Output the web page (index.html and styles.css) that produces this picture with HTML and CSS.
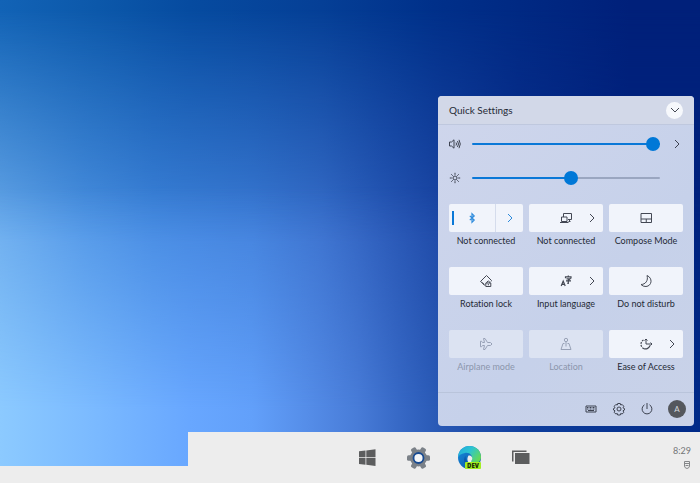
FILE: index.html
```html
<!DOCTYPE html>
<html lang="en">
<head>
<meta charset="utf-8">
<title>Quick Settings</title>
<link rel="stylesheet" href="styles.css">
</head>
<body>
<svg class="defs" aria-hidden="true">
  <symbol id="chevron" viewBox="0 0 12 12"><path d="M4 2l4 4-4 4"/></symbol>
</svg>
<div class="desktop">
  <div class="wallpaper"></div>

  <section class="panel">
    <header class="panel-head">
      <h1>Quick Settings</h1>
      <button class="collapse" aria-label="Collapse"><svg viewBox="0 0 12 12" class="ic ic-12"><path d="M2 4l4 4 4-4"/></svg></button>
    </header>

    <div class="sliders">
      <label class="slider-icon" for="volume" aria-label="Volume">
        <svg viewBox="0 0 14 14" class="ic ic-14"><path d="M1.500 5h2L6 2.800v8.400L3.500 9h-2zM8 5.500q1 1.500 0 3M9.500 4q2 3 0 6M11 2.800q2.600 4.200 0 8.400"/></svg>
      </label>
      <input type="range" id="volume" min="0" max="100" value="100" style="--fill:100%">
      <button class="more" aria-label="Audio devices"><svg class="ic ic-12"><use href="#chevron"/></svg></button>

      <label class="slider-icon" for="brightness" aria-label="Brightness">
        <svg viewBox="0 0 14 14" class="ic ic-14"><circle cx="7" cy="7" r="2"/><path d="M7 1.800v2M7 10.200v2M1.800 7h2M10.200 7h2M3.300 3.300l1.400 1.400M9.300 9.300l1.400 1.400M10.700 3.300L9.300 4.700M4.700 9.300l-1.400 1.400"/></svg>
      </label>
      <input type="range" id="brightness" min="0" max="100" value="53" style="--fill:53%">
    </div>

    <div class="tiles">
      <div class="tile on">
        <div class="tile-face">
          <button class="tile-main" aria-labelledby="t1"><svg viewBox="0 0 14 14" class="ic ic-14"><path d="M4.800 4.900l4.400 4.200L7 11.300V2.700l2.200 2.200-4.400 4.200" stroke-width="1.200"/></svg></button>
          <button class="tile-more" aria-label="Bluetooth devices"><svg class="ic ic-12"><use href="#chevron"/></svg></button>
        </div>
        <span class="tile-label" id="t1">Not connected</span>
      </div>
      <div class="tile">
        <div class="tile-face">
          <button class="tile-main" aria-labelledby="t2"><svg viewBox="0 0 14 14" class="ic ic-14"><path d="M4.500 6V2.500h8v6H9M2.500 6H8v4.500H2.500zM1 11.500h8.500M9.500 10.500h2M10.500 8.500v2"/></svg></button>
          <button class="tile-more" aria-label="Networks"><svg class="ic ic-12"><use href="#chevron"/></svg></button>
        </div>
        <span class="tile-label" id="t2">Not connected</span>
      </div>
      <div class="tile">
        <div class="tile-face">
          <button class="tile-main" aria-labelledby="t3"><svg viewBox="0 0 14 14" class="ic ic-14"><path d="M2 2.500h10.500v9H2zM2 8h10.500M7.250 8v3.500"/></svg></button>
        </div>
        <span class="tile-label" id="t3">Compose Mode</span>
      </div>
      <div class="tile">
        <div class="tile-face">
          <button class="tile-main" aria-labelledby="t4"><svg viewBox="0 0 14 14" class="ic ic-14"><path d="M5.500 10.500L1.500 7.500l6-6 5 5M3 8.500l2.500 3M12.500 6.500l-.500 1M6.800 9h5v3.500h-5zM7.800 9V8q1.500-2 3 0v1M9.300 10v1.300"/></svg></button>
        </div>
        <span class="tile-label" id="t4">Rotation lock</span>
      </div>
      <div class="tile">
        <div class="tile-face">
          <button class="tile-main" aria-labelledby="t5"><svg viewBox="0 0 14 14" class="ic ic-14"><path d="M2.200 12l2-5 2 5M3 10.300h2.400M6.500 4.200V2.800h5.500v1.400M9.300 1.500v1.300M7.500 4.800h3.500L9.300 6.300V9.300H8.300M7 6.800h5" stroke-width="1.200"/></svg></button>
          <button class="tile-more" aria-label="Languages"><svg class="ic ic-12"><use href="#chevron"/></svg></button>
        </div>
        <span class="tile-label" id="t5">Input language</span>
      </div>
      <div class="tile">
        <div class="tile-face">
          <button class="tile-main" aria-labelledby="t6"><svg viewBox="0 0 14 14" class="ic ic-14"><path d="M8 1.500C14 4 13 12 7 12.500Q4 12.700 2 10.500C6.500 10.500 9.500 6.500 8 1.500z"/></svg></button>
        </div>
        <span class="tile-label" id="t6">Do not disturb</span>
      </div>
      <div class="tile off">
        <div class="tile-face">
          <button class="tile-main" aria-labelledby="t7" disabled><svg viewBox="0 0 14 14" class="ic ic-14"><path d="M4.500 1.500H6L8.500 5.500h3q3 1.500 0 3h-3L6 12.500H4.500l1-4H3.500L2.500 9.800H1.500V4.200h1l1 1.300h2z"/></svg></button>
        </div>
        <span class="tile-label" id="t7">Airplane mode</span>
      </div>
      <div class="tile off">
        <div class="tile-face">
          <button class="tile-main" aria-labelledby="t8" disabled><svg viewBox="0 0 14 14" class="ic ic-14"><circle cx="7" cy="3" r="1.700"/><path d="M7 4.700V9.500M5.500 6.500H4l-2 6h10l-2-6H8.500"/></svg></button>
        </div>
        <span class="tile-label" id="t8">Location</span>
      </div>
      <div class="tile">
        <div class="tile-face">
          <button class="tile-main" aria-labelledby="t9"><svg viewBox="0 0 14 14" class="ic ic-14"><path d="M11 8.500A4.800 4.800 0 0 1 5 11.700" stroke-width="1.200"/><path d="M5 11.700A4.800 4.800 0 0 1 4.500 3" stroke-width="1.200" stroke-dasharray="2 1"/><path d="M7 2v5h6M7 2L5.500 3.500M7 2l1.500 1.500M13 7l-1.500-1.500M13 7l-1.500 1.500"/></svg></button>
          <button class="tile-more" aria-label="Accessibility options"><svg class="ic ic-12"><use href="#chevron"/></svg></button>
        </div>
        <span class="tile-label" id="t9">Ease of Access</span>
      </div>
    </div>

    <footer class="panel-foot">
      <button aria-label="Keyboard"><svg viewBox="0 0 14 14" class="ic ic-14"><path d="M2 4h10v6H2z"/><path d="M3 5.500h8M3 7h8" stroke-dasharray="1 .5"/><path d="M4 8.500h6"/></svg></button>
      <button aria-label="Settings"><svg viewBox="0 0 14 14" class="ic ic-14"><circle cx="7" cy="7" r="2"/><path d="M5.700 1.500h2.600l.4 1.500 1.500-.5 1.600 1.800-.8 1.500 1.500.8v1.400l-1.500.8.8 1.500-1.600 1.700-1.500-.5-.4 1.500H5.700L5.300 11.500l-1.500.5-1.600-1.700.8-1.500L1.500 8V6.600L3 5.800l-.8-1.500 1.600-1.800 1.500.5z"/></svg></button>
      <button aria-label="Power"><svg viewBox="0 0 14 14" class="ic ic-14"><path d="M7 1v6M4.500 2.800a4.900 4.900 0 1 0 5 0"/></svg></button>
      <button class="avatar" aria-label="Account">A</button>
    </footer>
  </section>

  <nav class="taskbar" aria-label="Taskbar">
    <div class="apps">
      <button aria-label="Start"><svg viewBox="0 0 26 26" class="app"><path fill="#5c5d5e" d="M4 6.300l6.500-.8v6.700H4zM11.300 5.400L20.500 4.300v7.900h-9.200zM4 13h6.500v6.700L4 18.900zM11.300 13h9.200v8l-9.200-1.200z"/></svg></button>
      <button aria-label="Settings app"><svg viewBox="0 0 26 26" class="app">
        <g fill="#7b8188">
          <circle cx="12.500" cy="13" r="8.500"/>
          <rect x="1" y="10.300" width="23" height="5.400" rx="1.500"/>
          <rect x="1" y="10.300" width="23" height="5.400" rx="1.500" transform="rotate(60 12.500 13)"/>
          <rect x="1" y="10.300" width="23" height="5.400" rx="1.500" transform="rotate(120 12.500 13)"/>
        </g>
        <circle cx="12.500" cy="13" r="5" fill="#f3f5f7" stroke="#174a92" stroke-width="1.800"/>
      </svg></button>
      <button aria-label="Edge Dev">
        <svg viewBox="0 0 26 26" class="app">
          <defs>
            <linearGradient id="wave" x1="0" y1="0" x2="1" y2=".6"><stop offset="0" stop-color="#20a6dc"/><stop offset=".5" stop-color="#2cc4d2"/><stop offset="1" stop-color="#63d957"/></linearGradient>
            <linearGradient id="deep" x1="0" y1="0" x2="1" y2="1"><stop offset="0" stop-color="#168de0"/><stop offset="1" stop-color="#0c4d9c"/></linearGradient>
          </defs>
          <circle cx="12.500" cy="12.500" r="11.500" fill="url(#deep)"/>
          <path fill="url(#wave)" d="M1 12.500C1.500 5 6.500 1 12.500 1c7 0 11.500 5 11.500 11 0 4-3 6.500-7 6.500-3 0-4-1.500-2.500-3.500 2-4-2-8-6.500-7-4 .5-6.500 2.500-7 4.500z"/>
          <path fill="#0b5aad" d="M8.500 11c-3 4-1 10 4 12h4v-4c-5 0-8-3-8-8z"/>
          <path fill="#ededed" d="M11.500 10.500c3-.5 5 2.500 3 5-.8 1.500 0 3 2.500 3l-2 1c-4-1-6-5-3.500-9z"/>
          <rect x="8" y="17" width="16" height="7" rx="1" fill="#a2ee22"/>
          <text class="badge" x="16" y="23" text-anchor="middle">DEV</text>
        </svg>
      </button>
      <button aria-label="Task view"><svg viewBox="0 0 26 26" class="app"><path fill="#5c5d5e" d="M4 5.500h14.500V7H5.500v9.500H4zM7 8h14.500v11H7z"/></svg></button>
    </div>
    <div class="tray">
      <time>8:29</time>
      <svg viewBox="0 0 8 8" class="ic ic-8"><path d="M1.500 .5h5v4.500q0 2-2.500 2.500Q1.500 7 1.500 5zM1.500 2.500h5M2.500 4.500h3"/></svg>
    </div>
  </nav>
</div>
</body>
</html>
```
FILE: styles.css
```css
* {
  box-sizing: border-box;
}

body {
  margin: 0;
  background: #ededed;
  color: #252a36;
  font: 9px/12px Lato, "Open Sans", sans-serif;
  font-variant-ligatures: none;
}

button {
  display: flex;
  align-items: center;
  justify-content: center;
  padding: 0;
  border: 0;
  background: none;
  color: inherit;
  font: inherit;
}

.defs {
  display: none;
}

.ic {
  display: block;
  fill: none;
  stroke: currentColor;
  stroke-width: 1;
  opacity: 0.85;
}

.ic-8 { width: 8px; height: 8px; }
.ic-12 { width: 12px; height: 12px; }
.ic-14 { width: 14px; height: 14px; }

/* Desktop: wallpaper runs behind the panel and the left end of the taskbar */
.desktop {
  display: grid;
  grid-template: 1fr 34px 17px / 188px 1fr;
  min-height: 100vh;
}

.wallpaper {
  display: grid;
  grid-area: 1 / 1 / 3 / 3;
  background: linear-gradient(to right, #1263b6, #0c58aa 14%, #064ba0 27%, #053f96 46%, #00308a 62%, #00207a 90%);
}

.wallpaper::before,
.wallpaper::after {
  content: "";
  grid-area: 1 / 1;
}

.wallpaper::before {
  background: linear-gradient(to right, #6aaaec, #4f94e4 12%, #4287de 22%, #3f7ed8 36%, #3a70cc 46%, #2c5cba 54%, #1f4aa8 62%, #0c3090 74%, #00227e 90%);
  mask-image: linear-gradient(transparent 2%, #000 52%);
}

.wallpaper::after {
  background: linear-gradient(to right, #8ccaff, #7ab9ff 14%, #68a7ff 27%, #62a0fa 36%, #558de8 44%, #487cd8 51%, #3769c6 57%, #2858b4 63%, #0e3e9c 76%, #002a88);
  mask-image: linear-gradient(transparent 40%, #000 88%);
}

/* Quick settings panel */
.panel {
  grid-area: 1 / 2;
  place-self: end;
  z-index: 1;
  width: 256px;
  margin: 6px;
  overflow: hidden;
  border-radius: 4px;
  background: linear-gradient(135deg, #cfd6ec, #c6d1ea 60%, #c9d2e8);
}

.panel-head {
  display: flex;
  align-items: center;
  justify-content: space-between;
  height: 29px;
  padding: 0 11px;
  border-bottom: 1px solid #bfc8de;
  background: #d2d8e8;
}

.panel-head h1 {
  margin: 0;
  font-size: 10px;
  font-weight: 400;
}

.collapse {
  width: 17px;
  height: 17px;
  border-radius: 50%;
  background: #f6f8fc;
}

.sliders {
  display: grid;
  grid-template-columns: 14px 188px 14px;
  grid-auto-rows: 34px;
  column-gap: 10px;
  align-items: center;
  padding: 2px 10px 9px;
}

input[type="range"] {
  width: 100%;
  height: 14px;
  margin: 0;
  appearance: none;
  background: none;
}

input[type="range"]::-webkit-slider-runnable-track {
  height: 2px;
  border-radius: 1px;
  background: linear-gradient(to right, #0a78d7 var(--fill), #9aa6c0 var(--fill));
}

input[type="range"]::-webkit-slider-thumb {
  width: 14px;
  height: 14px;
  margin-top: -6px;
  appearance: none;
  border-radius: 50%;
  background: #0078d7;
}

.tiles {
  display: grid;
  grid-template-columns: repeat(3, 1fr);
  gap: 18px 6px;
  padding: 0 11px;
}

.tile {
  text-align: center;
}

.tile-face {
  display: grid;
  grid-template-columns: 23px 1fr 23px;
  height: 28px;
  margin-bottom: 3px;
  border-radius: 2px;
  background: #f1f4fb;
}

.tile-main {
  grid-area: 1 / 1 / 2 / 4;
}

.tile-more {
  grid-area: 1 / 3;
}

.tile-label {
  display: block;
  height: 14px;
  white-space: nowrap;
}

.on .tile-face {
  grid-template-columns: 1fr 28px;
  color: #0a78d7;
}

.on .tile-main {
  grid-area: 1 / 1;
}

.on .tile-main::before {
  content: "";
  width: 2px;
  height: 14px;
  margin-right: 11px;
  background: #0a78d7;
}

.on .tile-main {
  justify-content: flex-start;
  padding-left: 3px;
}

.on .tile-more {
  grid-area: 1 / 2;
  border-left: 1px solid #d5dcec;
}

.off {
  color: #8c96ac;
}

.off .tile-face {
  background: #dce3f2;
}

.panel-foot {
  display: flex;
  align-items: center;
  justify-content: flex-end;
  gap: 14px;
  height: 34px;
  margin-top: 17px;
  padding: 0 8px 1px 0;
  border-top: 1px solid #b9c4db;
}

.avatar {
  width: 18px;
  height: 18px;
  border-radius: 50%;
  background: #54575d;
  color: #d5d7db;
  font-size: 8px;
}

/* Taskbar */
.taskbar {
  display: flex;
  grid-area: 2 / 2 / 4 / 3;
  z-index: 1;
  justify-content: flex-end;
  background: #ededed;
}

.apps {
  display: flex;
  align-items: center;
  gap: 25px;
  margin-right: 134px;
}

.app {
  display: block;
  width: 26px;
  height: 26px;
}

.badge {
  font: 800 6px "Open Sans", sans-serif;
  fill: #1c3008;
}

.tray {
  display: flex;
  flex-direction: column;
  align-items: flex-end;
  width: 32px;
  padding: 13px 9px 0 0;
  gap: 4px;
  color: #747678;
}
```
